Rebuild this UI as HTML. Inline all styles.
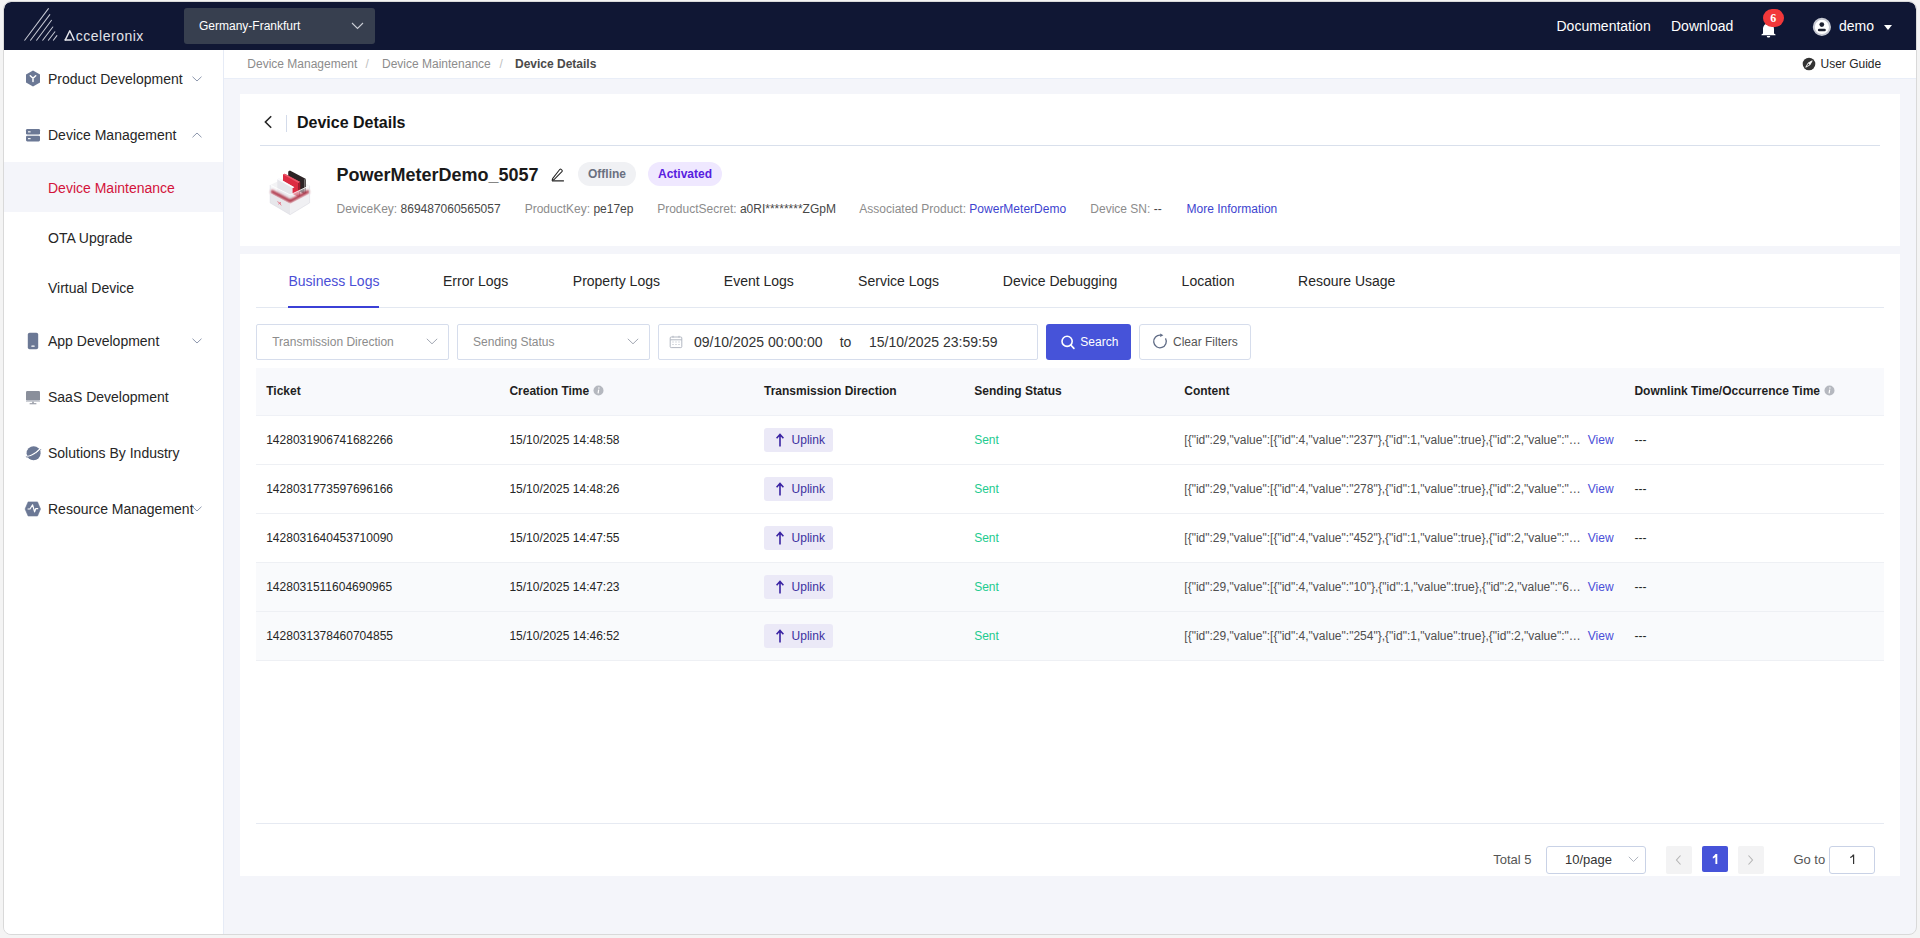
<!DOCTYPE html>
<html><head><meta charset="utf-8">
<style>
*{box-sizing:border-box;margin:0;padding:0}
html,body{width:1920px;height:938px;overflow:hidden;background:#f4f4f4;font-family:"Liberation Sans",sans-serif;position:relative}
#win{position:absolute;left:3px;top:1px;width:1914px;height:934px;border:1px solid #d9d9d9;border-radius:8px;overflow:hidden;background:#f4f5fa}
.b{position:absolute}
.t{position:absolute;white-space:nowrap;line-height:20px;height:20px}
.s12{font-size:12px}.s13{font-size:13px}.s14{font-size:14px}.s16{font-size:16px}.s18{font-size:18px}
.bd{font-weight:700}
</style></head><body>
<div id="win"></div>
<div id="clip" style="position:absolute;left:4px;top:2px;width:1912px;height:932px;border-radius:7px;overflow:hidden"><div style="position:absolute;left:-4px;top:-2px;width:1920px;height:938px">

<!-- HEADER -->
<div class="b" style="left:4px;top:2px;width:1912px;height:48px;background:#101734;border-radius:7px 7px 0 0"></div>
<svg class="b" style="left:20px;top:4px" width="130" height="44" viewBox="20 4 130 44">
 <defs>
  <linearGradient id="lg" x1="0" y1="1" x2="1" y2="0"><stop offset="0" stop-color="#fff" stop-opacity="0.35"/><stop offset="0.5" stop-color="#fff" stop-opacity="0.95"/><stop offset="1" stop-color="#fff" stop-opacity="0.45"/></linearGradient>
 </defs>
 <g stroke="#e4e6ee" stroke-width="1.05" stroke-linecap="round" opacity="0.85">
  <line x1="24.7" y1="40.2" x2="48.4" y2="8.6"/>
  <line x1="30.5" y1="40.2" x2="49.8" y2="14.6"/>
  <line x1="36.6" y1="40.2" x2="51.5" y2="20.3"/>
  <line x1="42.7" y1="40.2" x2="52.8" y2="27"/>
  <line x1="48.4" y1="40.2" x2="54.9" y2="31.8"/>
  <line x1="53.4" y1="40.2" x2="56.9" y2="35.6"/>
 </g>
 <path d="M65.1 40.4 L69.8 30.8 L74.3 40.4" fill="none" stroke="#e6e7ec" stroke-width="1.45" stroke-linejoin="round"/>
 <path d="M64.6 39.9 L71.8 39.9" stroke="#e6e7ec" stroke-width="1.5"/>
</svg>
<div class="t" style="left:75.8px;top:25.9px;font-size:14px;color:#e2e3e9;letter-spacing:0.5px">cceleronix</div>

<div class="b" style="left:184px;top:8px;width:191px;height:36px;background:#373f4f;border-radius:3px"></div>
<div class="t s12" style="left:199px;top:16.4px;color:#fff">Germany-Frankfurt</div>
<svg class="b" style="left:351px;top:22px" width="13" height="8" viewBox="0 0 13 8"><path d="M1 1 L6.5 6.5 L12 1" fill="none" stroke="#c9ccd4" stroke-width="1.1"/></svg>

<div class="t s14" style="left:1556.5px;top:16.2px;color:#fff">Documentation</div>
<div class="t s14" style="left:1671px;top:16.2px;color:#fff">Download</div>
<svg class="b" style="left:1760px;top:20px" width="18" height="18" viewBox="0 0 18 18">
 <path d="M3 13.5 L3 9 C3 5.5 5.5 3.2 8.5 3.2 C11.5 3.2 14 5.5 14 9 L14 13.5 L15.5 14.5 L15.5 15.2 L1.5 15.2 L1.5 14.5 Z" fill="#fff"/>
 <path d="M6.8 16 L10.2 16 C10.2 17 9.5 17.5 8.5 17.5 C7.5 17.5 6.8 17 6.8 16Z" fill="#fff"/>
</svg>
<div class="b" style="left:1763px;top:8.5px;width:20.5px;height:18.5px;border-radius:10px;background:#f2383a"></div>
<div class="t" style="left:1763px;top:7.5px;width:20.5px;text-align:center;color:#fff;font-size:12px;font-weight:700;font-family:'Liberation Serif',serif">6</div>
<svg class="b" style="left:1812px;top:17px" width="20" height="20" viewBox="0 0 20 20">
 <circle cx="9.9" cy="9.9" r="8.1" fill="#fff" stroke="#c6c9d2" stroke-width="2"/>
 <circle cx="9.8" cy="7.6" r="2.4" fill="#1d2130"/>
 <rect x="5.9" y="11.7" width="7.9" height="2.6" rx="1.3" fill="#1d2130"/>
</svg>
<div class="t s14" style="left:1839px;top:16.2px;color:#fff">demo</div>
<svg class="b" style="left:1884px;top:25px" width="8" height="5" viewBox="0 0 8 5"><path d="M0 0 L8 0 L4 5Z" fill="#fff"/></svg>

<!-- SIDEBAR -->
<div class="b" style="left:4px;top:50px;width:219px;height:884px;background:#fff"></div>
<div class="b" style="left:223px;top:50px;width:1px;height:884px;background:#e6ebf6"></div>
<div class="b" style="left:4px;top:162px;width:219px;height:50px;background:#f4f5fa"></div>

<svg class="b" style="left:25px;top:70px" width="16" height="17" viewBox="0 0 16 17">
 <path d="M8 0.6 L15 4.5 L15 12.5 L8 16.4 L1 12.5 L1 4.5 Z" fill="#6b7895"/>
 <path d="M5.3 5.8 L8 8.2 L10.7 5.8 M8 8.2 L8 11.6" stroke="#fff" stroke-width="1.5" fill="none" stroke-linecap="round"/>
</svg>
<div class="t s14" style="left:48px;top:69.4px;color:#262626">Product Development</div>
<svg class="b" style="left:192px;top:76px" width="10" height="6" viewBox="0 0 10 6"><path d="M0.5 0.7 L5 5 L9.5 0.7" fill="none" stroke="#8d97ad" stroke-width="1"/></svg>

<svg class="b" style="left:25px;top:128px" width="16" height="15" viewBox="0 0 16 15">
 <rect x="1" y="1" width="14" height="5.6" rx="1.3" fill="#6b7895"/>
 <rect x="1" y="7.8" width="14" height="5.6" rx="1.3" fill="#6b7895"/>
 <rect x="3" y="3.3" width="2.6" height="1.1" fill="#fff"/>
 <rect x="3" y="10.1" width="2.6" height="1.1" fill="#fff"/>
</svg>
<div class="t s14" style="left:48px;top:125.2px;color:#262626">Device Management</div>
<svg class="b" style="left:192px;top:132px" width="10" height="6" viewBox="0 0 10 6"><path d="M0.5 5.3 L5 1 L9.5 5.3" fill="none" stroke="#8d97ad" stroke-width="1"/></svg>

<div class="t s14" style="left:48px;top:178.3px;color:#d3133b">Device Maintenance</div>
<div class="t s14" style="left:48px;top:228px;color:#262626">OTA Upgrade</div>
<div class="t s14" style="left:48px;top:277.9px;color:#262626">Virtual Device</div>

<svg class="b" style="left:26px;top:332px" width="14" height="18" viewBox="0 0 14 18">
 <rect x="1.8" y="0.8" width="10.4" height="16.5" rx="1.8" fill="#6b7895"/>
 <rect x="5.3" y="13.5" width="3.4" height="1.2" rx="0.5" fill="#fff"/>
</svg>
<div class="t s14" style="left:48px;top:330.8px;color:#262626">App Development</div>
<svg class="b" style="left:192px;top:338px" width="10" height="6" viewBox="0 0 10 6"><path d="M0.5 0.7 L5 5 L9.5 0.7" fill="none" stroke="#8d97ad" stroke-width="1"/></svg>

<svg class="b" style="left:25px;top:390px" width="16" height="15" viewBox="0 0 16 15">
 <rect x="1" y="1" width="14" height="9.5" rx="1.2" fill="#8a8f9b"/>
 <rect x="1" y="10.5" width="14" height="1.2" fill="#b8bcc5"/>
 <rect x="7.3" y="11.7" width="1.4" height="1.6" fill="#8a8f9b"/>
 <rect x="4.5" y="13.2" width="7" height="1.1" rx="0.5" fill="#8a8f9b"/>
</svg>
<div class="t s14" style="left:48px;top:387.4px;color:#262626">SaaS Development</div>

<svg class="b" style="left:24px;top:444px" width="18" height="18" viewBox="0 0 18 18">
 <circle cx="9.6" cy="9.2" r="7" fill="#6b7895"/>
 <path d="M2.3 11.8 C3.5 13.4 11 10.8 16.6 4.6" fill="none" stroke="#fff" stroke-width="1.5"/>
 <path d="M1.9 12.6 C3.8 14.3 11.5 11.5 17 5.2" fill="none" stroke="#6b7895" stroke-width="0.9"/>
</svg>
<div class="t s14" style="left:48px;top:442.8px;color:#262626">Solutions By Industry</div>

<svg class="b" style="left:24px;top:501px" width="18" height="16" viewBox="0 0 18 16">
 <path d="M4.1 0.9 L13.5 0.9 L16.5 8 L13.5 15 L4.1 15 L1.1 8 Z" fill="#6b7895" stroke="#6b7895" stroke-width="0.6" stroke-linejoin="round"/>
 <path d="M3.6 8 L6 8 L8.6 3.8 L10.6 10.8 L11.7 7.7 L14.2 7.7" fill="none" stroke="#fff" stroke-width="1.2" stroke-linejoin="round"/>
</svg>
<div class="t s14" style="left:48px;top:499.2px;color:#262626">Resource Management</div>
<svg class="b" style="left:192px;top:506px" width="10" height="6" viewBox="0 0 10 6"><path d="M0.5 0.7 L5 5 L9.5 0.7" fill="none" stroke="#8d97ad" stroke-width="1"/></svg>

<!-- BREADCRUMB -->
<div class="b" style="left:224px;top:50px;width:1692px;height:28px;background:#fff"></div>
<div class="b" style="left:224px;top:78px;width:1692px;height:1px;background:#e9eef8"></div>
<div class="t s12" style="left:247.3px;top:54.1px;color:#8c8c8c">Device Management</div>
<div class="t s12" style="left:365.5px;top:54.1px;color:#bfbfbf">/</div>
<div class="t s12" style="left:382px;top:54.1px;color:#8c8c8c">Device Maintenance</div>
<div class="t s12" style="left:499.5px;top:54.1px;color:#bfbfbf">/</div>
<div class="t s12 bd" style="left:515px;top:54.1px;color:#4a4a4a">Device Details</div>
<svg class="b" style="left:1802px;top:57px" width="14" height="14" viewBox="0 0 14 14">
 <circle cx="7" cy="7" r="6.3" fill="#333"/>
 <path d="M10.2 3.8 L7.9 7.9 L3.8 10.2 L6.1 6.1 Z" fill="none" stroke="#fff" stroke-width="0.9" stroke-linejoin="round"/>
 <path d="M10.2 3.8 L7.9 7.9 L6.1 6.1 Z" fill="#fff"/>
</svg>
<div class="t s12" style="left:1820.5px;top:53.5px;color:#262626">User Guide</div>

<!-- CARD 1 -->
<div class="b" style="left:240px;top:94px;width:1660px;height:152px;background:#fff"></div>
<svg class="b" style="left:262px;top:114px" width="12" height="16" viewBox="0 0 12 16"><path d="M9.2 2.2 L3.4 8 L9.2 13.8" fill="none" stroke="#262626" stroke-width="1.6"/></svg>
<div class="b" style="left:286px;top:115px;width:1px;height:17px;background:#d3dbea"></div>
<div class="t s16 bd" style="left:297px;top:113.2px;color:#141414">Device Details</div>
<div class="b" style="left:260px;top:145px;width:1620px;height:1px;background:#d9e0ec"></div>

<svg class="b" style="left:260px;top:160px" width="60" height="60" viewBox="0 0 60 60">
 <defs>
  <filter id="bl" x="-20%" y="-50%" width="140%" height="200%"><feGaussianBlur stdDeviation="1.1"/></filter>
 </defs>
 <polygon points="10.2,25 30.1,15.4 49.6,25.6 30.1,34.9" fill="#f3f3f5"/>
 <polygon points="28.2,11.4 29.9,10.6 46,19 44.3,19.8 44.3,34 28.2,26" fill="#2c2325"/>
 <polygon points="44.3,19.8 46,19 46,33 44.3,34" fill="#55504f"/>
 <polygon points="23,14.6 24.7,13.8 40.2,22.1 38.5,22.9 38.5,37 23,29" fill="#dc2b42"/>
 <polygon points="23,14.6 24.7,13.8 40.2,22.1 38.5,22.9" fill="#ea5a6c"/>
 <polygon points="38.5,22.9 40.2,22.1 40.2,36 38.5,37" fill="#a8192c"/>
 <polygon points="17.3,19.4 19,18.6 34.3,27.3 32.6,28.1 32.6,42 17.3,34" fill="#e6e6eb"/>
 <polygon points="17.3,19.4 19,18.6 34.3,27.3 32.6,28.1" fill="#fafafc"/>
 <polygon points="10.2,25 30.1,34.9 30.1,44.1 10.2,33.3" fill="#efeff2" opacity="0.55"/>
 <polygon points="30.1,34.9 49.6,25.6 49.6,33.9 30.1,44.1" fill="#efeff2" opacity="0.55"/>
 <polyline points="11,31 30.1,41.2 49,31.2" fill="none" stroke="#a82236" stroke-width="3.2" filter="url(#bl)" opacity="0.9"/>
 <polygon points="10.2,33.3 30.1,44.1 30.1,54.7 10.2,42.9" fill="#e7e7eb"/>
 <polygon points="30.1,44.1 49.6,33.9 49.6,42.9 30.1,54.7" fill="#f0f0f3"/>
 <polyline points="10.2,25 30.1,34.9 49.6,25.6" fill="none" stroke="#ffffff" stroke-width="0.9" opacity="0.9"/>
 <polyline points="10.2,25 10.2,42.9 30.1,54.7 49.6,42.9 49.6,25.6" fill="none" stroke="#dcdce2" stroke-width="0.6"/>
 <path d="M17.4 41.6 L20.6 43.6 M18.3 44.2 L21 42.3 M19.6 43.3 L21.3 45.4" stroke="#e46a7c" stroke-width="0.8"/>
</svg>

<div class="t s18 bd" style="left:336.5px;top:164.7px;color:#1a1a1a">PowerMeterDemo_5057</div>
<svg class="b" style="left:550px;top:167px" width="15" height="16" viewBox="0 0 15 16">
 <path d="M2.6 11.6 L2.1 13.3 L3.8 12.8 L11.9 4.7 C12.4 4.2 12.4 3.6 11.9 3.1 L11.3 2.5 C10.8 2 10.2 2 9.7 2.5 Z" fill="none" stroke="#262626" stroke-width="1.05" stroke-linejoin="round"/>
 <path d="M2 13.9 L13.9 13.9" stroke="#262626" stroke-width="1.1"/>
</svg>
<div class="b" style="left:578px;top:162px;width:58px;height:24px;border-radius:12px;background:#f0f1f4"></div>
<div class="t s12 bd" style="left:578px;top:163.8px;width:58px;text-align:center;color:#6b7080">Offline</div>
<div class="b" style="left:648px;top:162px;width:74px;height:24px;border-radius:12px;background:#efe8ff"></div>
<div class="t s12 bd" style="left:648px;top:163.8px;width:74px;text-align:center;color:#5820e0">Activated</div>

<div class="t s12" style="left:336.5px;top:199px;color:#8c8c8c">DeviceKey: <span style="color:#474747">869487060565057</span></div>
<div class="t s12" style="left:524.7px;top:199px;color:#8c8c8c">ProductKey: <span style="color:#474747">pe17ep</span></div>
<div class="t s12" style="left:657.2px;top:199px;color:#8c8c8c">ProductSecret: <span style="color:#474747">a0RI********ZGpM</span></div>
<div class="t s12" style="left:859.3px;top:199px;color:#8c8c8c">Associated Product: <span style="color:#3d44cf">PowerMeterDemo</span></div>
<div class="t s12" style="left:1090.3px;top:199px;color:#8c8c8c">Device SN: <span style="color:#474747">--</span></div>
<div class="t s12" style="left:1186.6px;top:199px;color:#3d44cf">More Information</div>

<!-- CARD 2 -->
<div class="b" style="left:240px;top:254px;width:1660px;height:622px;background:#fff"></div>
<div class="t s14" style="left:288.4px;top:271px;color:#4b4fd6">Business Logs</div>
<div class="t s14" style="left:443px;top:271px;color:#262626">Error Logs</div>
<div class="t s14" style="left:572.8px;top:271px;color:#262626">Property Logs</div>
<div class="t s14" style="left:723.8px;top:271px;color:#262626">Event Logs</div>
<div class="t s14" style="left:858.1px;top:271px;color:#262626">Service Logs</div>
<div class="t s14" style="left:1002.8px;top:271px;color:#262626">Device Debugging</div>
<div class="t s14" style="left:1181.6px;top:271px;color:#262626">Location</div>
<div class="t s14" style="left:1298.1px;top:271px;color:#262626">Resoure Usage</div>
<div class="b" style="left:256px;top:307px;width:1628px;height:1px;background:#e3e8f1"></div>
<div class="b" style="left:288px;top:306px;width:91px;height:2px;background:#3b40d6"></div>

<div class="b" style="left:256px;top:324px;width:193px;height:36px;border:1px solid #d6ddec;border-radius:2px"></div>
<div class="t s12" style="left:272.2px;top:331.5px;color:#8c8c8c">Transmission Direction</div>
<svg class="b" style="left:426px;top:338px" width="12" height="7" viewBox="0 0 12 7"><path d="M0.8 0.8 L6 5.8 L11.2 0.8" fill="none" stroke="#a2a7b2" stroke-width="1"/></svg>
<div class="b" style="left:457px;top:324px;width:193px;height:36px;border:1px solid #d6ddec;border-radius:2px"></div>
<div class="t s12" style="left:473.1px;top:331.5px;color:#8c8c8c">Sending Status</div>
<svg class="b" style="left:627px;top:338px" width="12" height="7" viewBox="0 0 12 7"><path d="M0.8 0.8 L6 5.8 L11.2 0.8" fill="none" stroke="#a2a7b2" stroke-width="1"/></svg>
<div class="b" style="left:658px;top:324px;width:380px;height:36px;border:1px solid #d6ddec;border-radius:2px"></div>
<svg class="b" style="left:669px;top:335px" width="14" height="14" viewBox="0 0 14 14">
 <rect x="1.2" y="2" width="11.6" height="10.6" rx="1" fill="none" stroke="#b3b8c2" stroke-width="1"/>
 <path d="M1.2 4.8 L12.8 4.8" stroke="#b3b8c2" stroke-width="1"/>
 <path d="M4 0.8 L4 2.6 M10 0.8 L10 2.6" stroke="#b3b8c2" stroke-width="1"/>
 <path d="M3.5 7 h1 M6.5 7 h1 M9.5 7 h1 M3.5 9.5 h1 M6.5 9.5 h1 M9.5 9.5 h1" stroke="#b3b8c2" stroke-width="1"/>
</svg>
<div class="t s14" style="left:694px;top:331.5px;color:#333">09/10/2025 00:00:00</div>
<div class="t s14" style="left:839.7px;top:331.5px;color:#333">to</div>
<div class="t s14" style="left:869px;top:331.5px;color:#333">15/10/2025 23:59:59</div>

<div class="b" style="left:1046px;top:324px;width:85px;height:36px;border-radius:3px;background:#4653d9"></div>
<svg class="b" style="left:1059.5px;top:333.5px" width="16" height="17" viewBox="0 0 16 17">
 <circle cx="7.1" cy="7.3" r="5.1" fill="none" stroke="#fff" stroke-width="1.6"/>
 <path d="M10.8 11 L13.9 14.3" stroke="#fff" stroke-width="1.7" stroke-linecap="round"/>
</svg>
<div class="t s12" style="left:1080.3px;top:331.5px;color:#fff">Search</div>
<div class="b" style="left:1139px;top:324px;width:112px;height:36px;border:1px solid #d6ddec;border-radius:3px"></div>
<svg class="b" style="left:1151px;top:333.4px" width="18" height="18" viewBox="0 0 18 18">
 <path d="M9.6 2.2 A6.3 6.3 0 1 0 14.5 5.4" fill="none" stroke="#5f6b85" stroke-width="1.3"/>
 <path d="M9.2 0.5 L12.4 2.2 L9.2 4Z" fill="#5f6b85"/>
</svg>
<div class="t s12" style="left:1173px;top:331.5px;color:#555">Clear Filters</div>

<!-- TABLE -->
<div class="b" style="left:256px;top:368px;width:1628px;height:48px;background:#f8f9fc;border-bottom:1px solid #eff1f6"></div>
<div class="t s12 bd" style="left:266.2px;top:381px;color:#1f1f1f">Ticket</div>
<div class="t s12 bd" style="left:509.4px;top:381px;color:#1f1f1f">Creation Time</div>
<svg class="b" style="left:593px;top:385px" width="11" height="11" viewBox="0 0 11 11"><circle cx="5.5" cy="5.5" r="5" fill="#b5b8bf"/><path d="M5.7 4.6 L5.1 8.4" stroke="#fff" stroke-width="1.2"/><circle cx="5.9" cy="3" r="0.7" fill="#fff"/></svg>
<div class="t s12 bd" style="left:764px;top:381px;color:#1f1f1f">Transmission Direction</div>
<div class="t s12 bd" style="left:974.3px;top:381px;color:#1f1f1f">Sending Status</div>
<div class="t s12 bd" style="left:1184.3px;top:381px;color:#1f1f1f">Content</div>
<div class="t s12 bd" style="left:1634.4px;top:381px;color:#1f1f1f">Downlink Time/Occurrence Time</div>
<svg class="b" style="left:1823.5px;top:385px" width="11" height="11" viewBox="0 0 11 11"><circle cx="5.5" cy="5.5" r="5" fill="#b5b8bf"/><path d="M5.7 4.6 L5.1 8.4" stroke="#fff" stroke-width="1.2"/><circle cx="5.9" cy="3" r="0.7" fill="#fff"/></svg>

<!--ROWS-->
<div class="b" style="left:256px;top:464px;width:1628px;height:1px;background:#eef0f4"></div>
<div class="t s12" style="left:266.2px;top:429.7px;color:#262626">1428031906741682266</div>
<div class="t s12" style="left:509.4px;top:429.7px;color:#262626">15/10/2025 14:48:58</div>
<div class="b" style="left:764px;top:428px;width:69px;height:24px;border-radius:3px;background:#ebe9f7"></div>
<svg class="b" style="left:775px;top:433px" width="10" height="14" viewBox="0 0 10 14"><path d="M5 13.5 L5 1.8 M1.6 5.2 L5 1.5 L8.4 5.2" fill="none" stroke="#3a23a3" stroke-width="1.6"/></svg>
<div class="t s12" style="left:791.6px;top:429.7px;color:#3b30a0">Uplink</div>
<div class="t s12" style="left:974.2px;top:429.7px;color:#1ecb8f">Sent</div>
<div class="t s12" style="left:1184.3px;top:429.7px;width:396px;overflow:hidden;color:#4f4f4f">[{&quot;id&quot;:29,&quot;value&quot;:[{&quot;id&quot;:4,&quot;value&quot;:&quot;237&quot;},{&quot;id&quot;:1,&quot;value&quot;:true},{&quot;id&quot;:2,&quot;value&quot;:&quot;…</div>
<div class="t s12" style="left:1587.8px;top:429.7px;color:#4a4fd8">View</div>
<div class="t s12" style="left:1634.4px;top:429.7px;color:#262626">---</div>
<div class="b" style="left:256px;top:513px;width:1628px;height:1px;background:#eef0f4"></div>
<div class="t s12" style="left:266.2px;top:478.7px;color:#262626">1428031773597696166</div>
<div class="t s12" style="left:509.4px;top:478.7px;color:#262626">15/10/2025 14:48:26</div>
<div class="b" style="left:764px;top:477px;width:69px;height:24px;border-radius:3px;background:#ebe9f7"></div>
<svg class="b" style="left:775px;top:482px" width="10" height="14" viewBox="0 0 10 14"><path d="M5 13.5 L5 1.8 M1.6 5.2 L5 1.5 L8.4 5.2" fill="none" stroke="#3a23a3" stroke-width="1.6"/></svg>
<div class="t s12" style="left:791.6px;top:478.7px;color:#3b30a0">Uplink</div>
<div class="t s12" style="left:974.2px;top:478.7px;color:#1ecb8f">Sent</div>
<div class="t s12" style="left:1184.3px;top:478.7px;width:396px;overflow:hidden;color:#4f4f4f">[{&quot;id&quot;:29,&quot;value&quot;:[{&quot;id&quot;:4,&quot;value&quot;:&quot;278&quot;},{&quot;id&quot;:1,&quot;value&quot;:true},{&quot;id&quot;:2,&quot;value&quot;:&quot;…</div>
<div class="t s12" style="left:1587.8px;top:478.7px;color:#4a4fd8">View</div>
<div class="t s12" style="left:1634.4px;top:478.7px;color:#262626">---</div>
<div class="b" style="left:256px;top:562px;width:1628px;height:1px;background:#eef0f4"></div>
<div class="t s12" style="left:266.2px;top:527.7px;color:#262626">1428031640453710090</div>
<div class="t s12" style="left:509.4px;top:527.7px;color:#262626">15/10/2025 14:47:55</div>
<div class="b" style="left:764px;top:526px;width:69px;height:24px;border-radius:3px;background:#ebe9f7"></div>
<svg class="b" style="left:775px;top:531px" width="10" height="14" viewBox="0 0 10 14"><path d="M5 13.5 L5 1.8 M1.6 5.2 L5 1.5 L8.4 5.2" fill="none" stroke="#3a23a3" stroke-width="1.6"/></svg>
<div class="t s12" style="left:791.6px;top:527.7px;color:#3b30a0">Uplink</div>
<div class="t s12" style="left:974.2px;top:527.7px;color:#1ecb8f">Sent</div>
<div class="t s12" style="left:1184.3px;top:527.7px;width:396px;overflow:hidden;color:#4f4f4f">[{&quot;id&quot;:29,&quot;value&quot;:[{&quot;id&quot;:4,&quot;value&quot;:&quot;452&quot;},{&quot;id&quot;:1,&quot;value&quot;:true},{&quot;id&quot;:2,&quot;value&quot;:&quot;…</div>
<div class="t s12" style="left:1587.8px;top:527.7px;color:#4a4fd8">View</div>
<div class="t s12" style="left:1634.4px;top:527.7px;color:#262626">---</div>
<div class="b" style="left:256px;top:563px;width:1628px;height:48px;background:#f9fafc"></div>
<div class="b" style="left:256px;top:611px;width:1628px;height:1px;background:#eef0f4"></div>
<div class="t s12" style="left:266.2px;top:576.7px;color:#262626">1428031511604690965</div>
<div class="t s12" style="left:509.4px;top:576.7px;color:#262626">15/10/2025 14:47:23</div>
<div class="b" style="left:764px;top:575px;width:69px;height:24px;border-radius:3px;background:#ebe9f7"></div>
<svg class="b" style="left:775px;top:580px" width="10" height="14" viewBox="0 0 10 14"><path d="M5 13.5 L5 1.8 M1.6 5.2 L5 1.5 L8.4 5.2" fill="none" stroke="#3a23a3" stroke-width="1.6"/></svg>
<div class="t s12" style="left:791.6px;top:576.7px;color:#3b30a0">Uplink</div>
<div class="t s12" style="left:974.2px;top:576.7px;color:#1ecb8f">Sent</div>
<div class="t s12" style="left:1184.3px;top:576.7px;width:396px;overflow:hidden;color:#4f4f4f">[{&quot;id&quot;:29,&quot;value&quot;:[{&quot;id&quot;:4,&quot;value&quot;:&quot;10&quot;},{&quot;id&quot;:1,&quot;value&quot;:true},{&quot;id&quot;:2,&quot;value&quot;:&quot;6…</div>
<div class="t s12" style="left:1587.8px;top:576.7px;color:#4a4fd8">View</div>
<div class="t s12" style="left:1634.4px;top:576.7px;color:#262626">---</div>
<div class="b" style="left:256px;top:612px;width:1628px;height:48px;background:#f9fafc"></div>
<div class="b" style="left:256px;top:660px;width:1628px;height:1px;background:#eef0f4"></div>
<div class="t s12" style="left:266.2px;top:625.7px;color:#262626">1428031378460704855</div>
<div class="t s12" style="left:509.4px;top:625.7px;color:#262626">15/10/2025 14:46:52</div>
<div class="b" style="left:764px;top:624px;width:69px;height:24px;border-radius:3px;background:#ebe9f7"></div>
<svg class="b" style="left:775px;top:629px" width="10" height="14" viewBox="0 0 10 14"><path d="M5 13.5 L5 1.8 M1.6 5.2 L5 1.5 L8.4 5.2" fill="none" stroke="#3a23a3" stroke-width="1.6"/></svg>
<div class="t s12" style="left:791.6px;top:625.7px;color:#3b30a0">Uplink</div>
<div class="t s12" style="left:974.2px;top:625.7px;color:#1ecb8f">Sent</div>
<div class="t s12" style="left:1184.3px;top:625.7px;width:396px;overflow:hidden;color:#4f4f4f">[{&quot;id&quot;:29,&quot;value&quot;:[{&quot;id&quot;:4,&quot;value&quot;:&quot;254&quot;},{&quot;id&quot;:1,&quot;value&quot;:true},{&quot;id&quot;:2,&quot;value&quot;:&quot;…</div>
<div class="t s12" style="left:1587.8px;top:625.7px;color:#4a4fd8">View</div>
<div class="t s12" style="left:1634.4px;top:625.7px;color:#262626">---</div>
<!--/ROWS-->

<div class="b" style="left:256px;top:823px;width:1628px;height:1px;background:#e6eaf2"></div>

<!-- PAGINATION -->
<div class="t s13" style="left:1493.2px;top:849.7px;color:#555">Total 5</div>
<div class="b" style="left:1546px;top:846px;width:100px;height:28px;border:1px solid #c9d2e6;border-radius:3px"></div>
<div class="t s13" style="left:1565px;top:849.7px;color:#333">10/page</div>
<svg class="b" style="left:1628px;top:856px" width="11" height="7" viewBox="0 0 11 7"><path d="M0.8 0.8 L5.5 5.5 L10.2 0.8" fill="none" stroke="#b0b5bf" stroke-width="1"/></svg>
<div class="b" style="left:1666px;top:846px;width:26px;height:28px;background:#f3f3f4;border-radius:2px"></div>
<svg class="b" style="left:1674px;top:854px" width="9" height="12" viewBox="0 0 9 12"><path d="M6.5 1.5 L2.5 6 L6.5 10.5" fill="none" stroke="#b5b5b5" stroke-width="1.1"/></svg>
<div class="b" style="left:1702px;top:846px;width:26px;height:26px;background:#4653d9;border-radius:2px"></div>
<svg class="b" style="left:1710px;top:852px" width="10" height="14" viewBox="0 0 10 14"><path d="M5.4 2 L7.3 2 L7.3 12.1 L5.4 12.1 L5.4 4.9 C4.7 5.6 3.7 6.1 2.8 6.4 L2.8 4.7 C3.9 4.2 4.9 3.2 5.4 2 Z" fill="#fff"/></svg>
<div class="b" style="left:1738px;top:846px;width:26px;height:28px;background:#f3f3f4;border-radius:2px"></div>
<svg class="b" style="left:1746px;top:854px" width="9" height="12" viewBox="0 0 9 12"><path d="M2.5 1.5 L6.5 6 L2.5 10.5" fill="none" stroke="#b5b5b5" stroke-width="1.1"/></svg>
<div class="t s13" style="left:1793.4px;top:849.7px;color:#555">Go to</div>
<div class="b" style="left:1829px;top:846px;width:46px;height:28px;border:1px solid #c9d2e6;border-radius:3px"></div>
<svg class="b" style="left:1847px;top:852px" width="10" height="14" viewBox="0 0 10 14"><path d="M5.9 2.6 L7.2 2.6 L7.2 12.1 L6 12.1 L6 4.5 C5.3 5.2 4.2 5.8 3.1 6.1 L3.1 5 C4.3 4.5 5.3 3.7 5.9 2.6 Z" fill="#333"/></svg>

</div></div>
</body></html>
